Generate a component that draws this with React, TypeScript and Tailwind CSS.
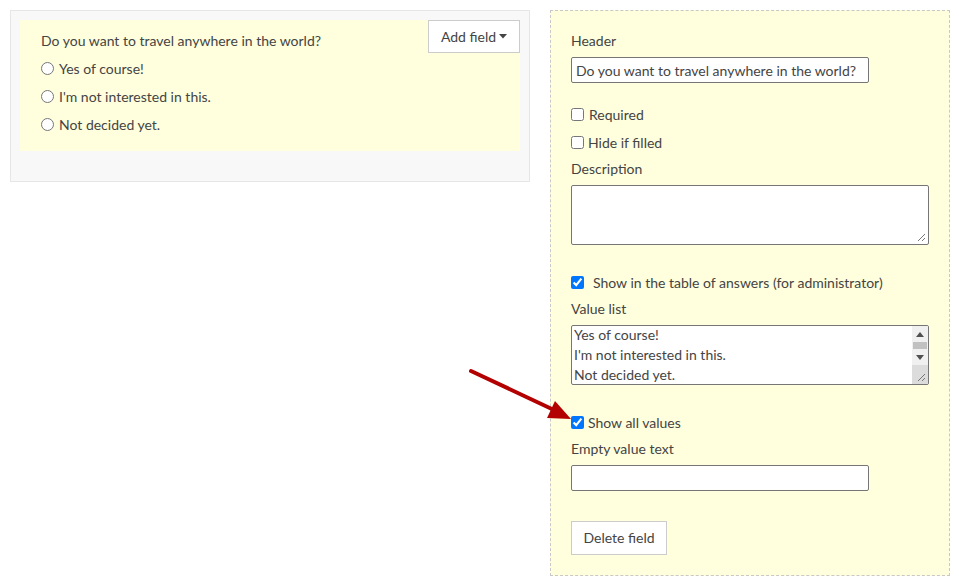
import React from "react";

const font = { fontFamily: "Lato, 'Open Sans', sans-serif" };

function Check({ checked, label, gap = "ml-[5px]" }: { checked?: boolean; label: string; gap?: string }) {
  return (
    <label className="flex items-center h-5">
      <input type="checkbox" defaultChecked={checked} className="w-[13px] h-[13px] m-0 accent-[#0075ff]" />
      <span className={`${gap} text-[14px] text-[#444]`}>{label}</span>
    </label>
  );
}

function Radio({ label }: { label: string }) {
  return (
    <label className="flex items-center h-5">
      <input type="radio" name="q" className="w-[13px] h-[13px] m-0" />
      <span className="ml-[5px] text-[14px] text-[#444]">{label}</span>
    </label>
  );
}

function Grip() {
  return (
    <svg width="9" height="9" viewBox="0 0 9 9" className="absolute right-[2px] bottom-[2px]">
      <path d="M8 1L1 8M8 5L5 8" stroke="#777" strokeWidth="1" />
    </svg>
  );
}

export default function App() {
  return (
    <div className="relative w-[959px] h-[584px] bg-white" style={font}>
      <div className="flex items-start gap-5 pt-[10px] pl-[10px]">
        {/* Left panel */}
        <div className="w-[520px] bg-[#f8f8f8] border border-[#e6e6e6] pt-[9px] px-[9px] pb-[30px]">
          <div className="relative bg-[#ffffdd] pl-[21px] pt-[10px] pb-[17px] flex flex-col gap-2">
            <div className="h-5 flex items-center text-[14px] text-[#444]">Do you want to travel anywhere in the world?</div>
            <Radio label="Yes of course!" />
            <Radio label="I'm not interested in this." />
            <Radio label="Not decided yet." />
            <button className="absolute top-0 right-0 w-[92px] h-[33px] bg-white border border-[#cccccc] text-[14px] text-[#444] flex items-center justify-center gap-[3px]">
              Add field
              <svg width="8" height="5" viewBox="0 0 8 5"><path d="M0 0h8L4 4.5z" fill="#444" /></svg>
            </button>
          </div>
        </div>

        {/* Right panel */}
        <div className="w-[400px] h-[566px] bg-[#ffffdd] border border-dashed border-[#c8c8c8] pl-5 pr-5 pt-[19px]">
          <div className="h-5 flex items-center text-[14px] text-[#444]">Header</div>
          <input
            className="mt-[7px] block w-[298px] h-[26px] bg-white border border-[#767676] rounded-[2px] px-[4px] text-[14px] text-[#444] outline-none"
            defaultValue="Do you want to travel anywhere in the world?"
          />
          <div className="mt-[21px]">
            <Check label="Required" />
          </div>
          <div className="mt-2">
            <Check label="Hide if filled" gap="ml-[4px]" />
          </div>
          <div className="mt-[6px] h-5 flex items-center text-[14px] text-[#444]">Description</div>
          <div className="mt-[7px] relative w-[358px] h-[60px] bg-white border border-[#767676] rounded-[2px]">
            <Grip />
          </div>
          <div className="mt-[27px]">
            <Check checked label="Show in the table of answers (for administrator)" gap="ml-[9px]" />
          </div>
          <div className="mt-[6px] h-5 flex items-center text-[14px] text-[#444]">Value list</div>
          <div className="mt-[7px] flex w-[358px] h-[60px] bg-white border border-[#767676] rounded-[2px] overflow-hidden">
            <div className="flex-1 px-[2px] text-[14px] leading-[20px] text-[#444] -mt-[1px]">
              <div>Yes of course!</div>
              <div>I'm not interested in this.</div>
              <div>Not decided yet.</div>
            </div>
            <div className="w-[16px] flex flex-col bg-[#f0f0f0]">
              <div className="h-[16px] flex items-center justify-center">
                <svg width="8" height="5" viewBox="0 0 8 5"><path d="M4 0L8 5H0z" fill="#505050" /></svg>
              </div>
              <div className="h-[7px] mx-[1px] bg-[#c1c1c1]" />
              <div className="h-[16px] flex items-center justify-center">
                <svg width="8" height="5" viewBox="0 0 8 5"><path d="M0 0h8L4 5z" fill="#505050" /></svg>
              </div>
              <div className="flex-1 relative bg-[#dcdcdc]">
                <Grip />
              </div>
            </div>
          </div>
          <div className="mt-[27px]">
            <Check checked label="Show all values" gap="ml-[4px]" />
          </div>
          <div className="mt-[6px] h-5 flex items-center text-[14px] text-[#444]">Empty value text</div>
          <input className="mt-[7px] block w-[298px] h-[26px] bg-white border border-[#767676] rounded-[2px] outline-none" />
          <button className="mt-[30px] w-[96px] h-[34px] bg-white border border-[#cccccc] text-[14px] text-[#444] pb-[1px]">
            Delete field
          </button>
        </div>
      </div>

      {/* Annotation arrow */}
      <svg className="absolute left-0 top-0 pointer-events-none" width="959" height="584">
        <line x1="471" y1="371" x2="554" y2="410" stroke="#b30000" strokeWidth="4" strokeLinecap="round" />
        <polygon points="571,419 555,401 547,418" fill="#b30000" />
      </svg>
    </div>
  );
}
